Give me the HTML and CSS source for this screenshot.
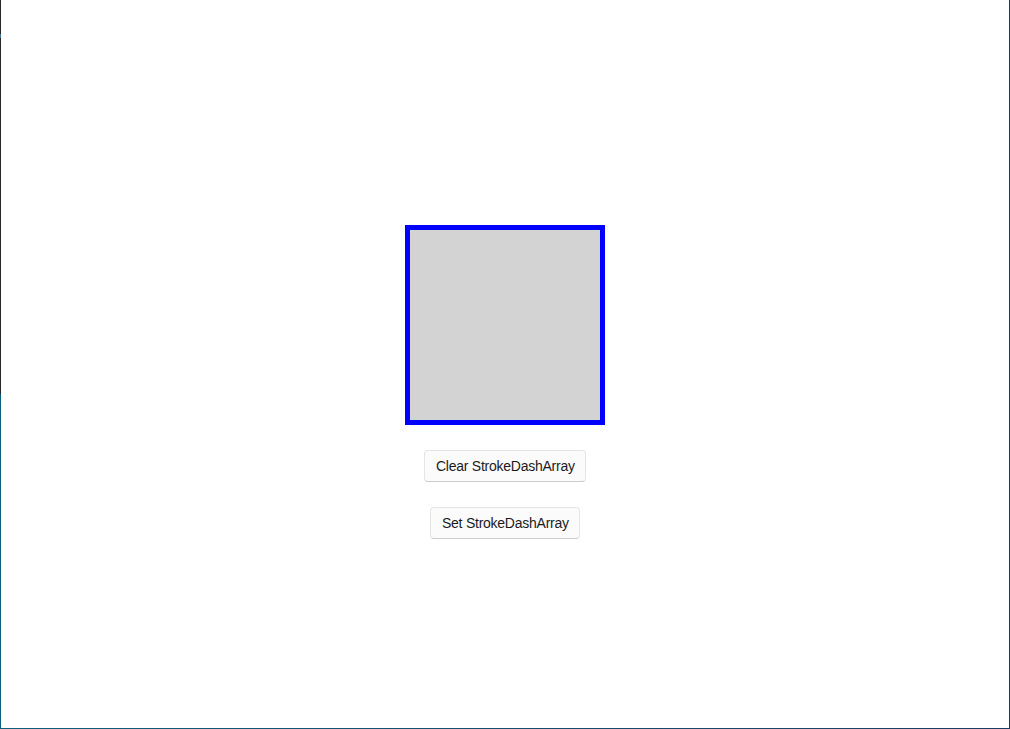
FILE: index.html
```html
<!DOCTYPE html>
<html lang="en">
<head>
<meta charset="utf-8">
<title>StrokeDashArray</title>
<link rel="stylesheet" href="styles.css">
</head>
<body>
<div class="frame">
  <main class="content">
    <div class="shape"></div>
    <button class="btn btn-clear" type="button">Clear StrokeDashArray</button>
    <button class="btn btn-set" type="button">Set StrokeDashArray</button>
  </main>
</div>
</body>
</html>
```

FILE: styles.css
```css
html, body {
  margin: 0;
  padding: 0;
  width: 1010px;
  height: 729px;
  overflow: hidden;
  background: #ffffff;
}

.frame {
  box-sizing: border-box;
  width: 1010px;
  height: 729px;
  padding: 0 1px 1px 1px;
  background:
    linear-gradient(to bottom, #262626 0, #262626 34px, #3d6f8c 34px, #3d6f8c 38px, #262626 38px, #262626 394px, #0d5f7b 394px) left top / 1px 100% no-repeat,
    linear-gradient(to right, #0d5f7b, #1d3d63) left bottom / 100% 1px no-repeat,
    #1d3a5e;
}

.content {
  box-sizing: border-box;
  height: 100%;
  background: #ffffff;
  display: flex;
  flex-direction: column;
  align-items: center;
  padding-top: 225px;
  gap: 25px;
  font-family: "Segoe UI", "Liberation Sans", Arial, sans-serif;
}

.shape {
  box-sizing: border-box;
  width: 200px;
  height: 200px;
  background: #d3d3d3;
  border: 5px solid #0000ff;
}

.btn {
  box-sizing: border-box;
  height: 32px;
  padding: 0 11px 1px;
  border: 1px solid #e5e5e5;
  border-bottom-color: #cccccc;
  border-radius: 4px;
  background: #fbfbfb;
  color: #1b1b1b;
  font-family: "Segoe UI", "Liberation Sans", Arial, sans-serif;
  font-size: 14px;
  letter-spacing: -0.25px;
  white-space: nowrap;
}

.btn-clear {
  width: 162px;
}

.btn-set {
  width: 150px;
}
```
